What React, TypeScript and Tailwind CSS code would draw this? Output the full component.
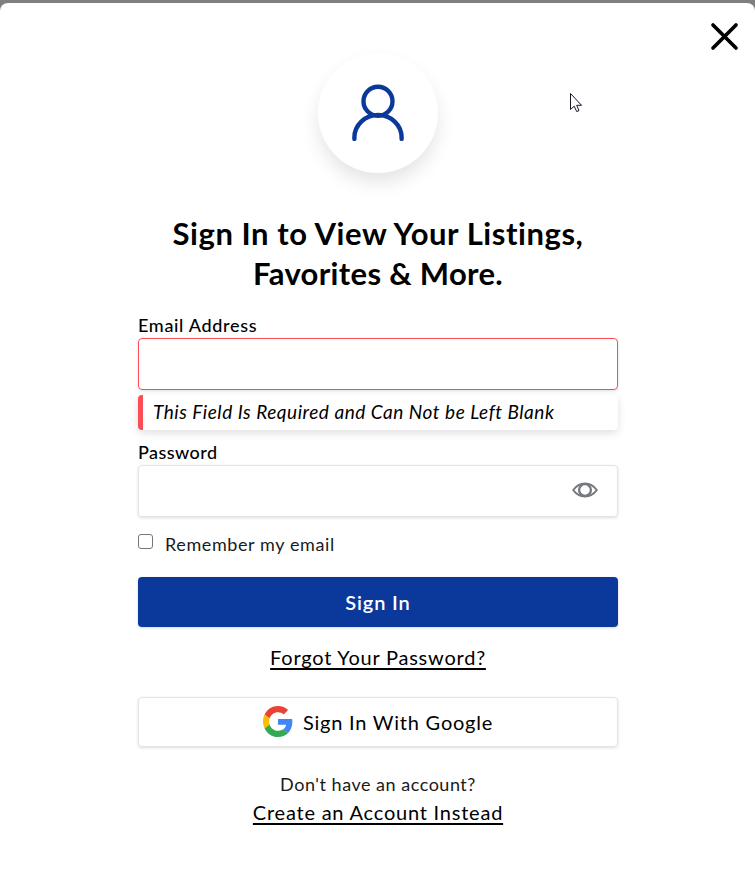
function UserIcon() {
  return (
    <svg width="56" height="60" viewBox="0 0 56 60" fill="none" stroke="#0a389b" strokeWidth="4.400" strokeLinecap="round">
      <circle cx="28" cy="18.300" r="14.500" />
      <path d="M4.400 55.900V54.500A23.600 22.500 0 0 1 51.600 54.500V55.900" />
    </svg>
  );
}

function GoogleLogo() {
  return (
    <svg width="30" height="31" viewBox="0 0 48 48" preserveAspectRatio="none">
      <path fill="#EA4335" d="M24 9.500c3.540 0 6.710 1.220 9.210 3.600l6.850-6.850C35.900 2.380 30.470 0 24 0 14.620 0 6.510 5.380 2.560 13.220l7.980 6.190C12.430 13.720 17.740 9.500 24 9.500z" />
      <path fill="#4285F4" d="M46.980 24.550c0-1.570-.15-3.090-.38-4.550H24v9.020h12.940c-.58 2.960-2.260 5.480-4.780 7.180l7.730 6c4.510-4.180 7.090-10.360 7.090-17.650z" />
      <path fill="#FBBC05" d="M10.530 28.590c-.48-1.450-.76-2.990-.76-4.590s.27-3.140.76-4.590l-7.980-6.190C.92 16.460 0 20.120 0 24s.92 7.540 2.560 10.780l7.970-6.190z" />
      <path fill="#34A853" d="M24 48c6.480 0 11.930-2.130 15.890-5.810l-7.730-6c-2.150 1.450-4.920 2.300-8.160 2.300-6.260 0-11.570-4.220-13.470-9.910l-7.980 6.190C6.510 42.620 14.620 48 24 48z" />
    </svg>
  );
}

export default function App() {
  return (
    <div className="h-[874px] w-[755px] overflow-hidden bg-[#7f7f7f] pt-[3px] font-['Lato',sans-serif] text-black">
      <div className="relative flex h-[871px] flex-col items-center rounded-t-[8px] bg-white">
        <button aria-label="Close" className="absolute top-[19px] right-[16px]">
          <svg width="29" height="29" viewBox="0 0 29 29" stroke="#000" strokeWidth="3.700" strokeLinecap="round">
            <path d="M3 3L26 26M26 3L3 26" />
          </svg>
        </button>
        <svg className="absolute top-[89px] left-[569px]" width="14" height="22" viewBox="0 0 14 22" fill="#fff" stroke="#15152a" strokeWidth="1">
          <path d="M1.500 1.500V17.500L5.200 14.200L7.700 19.600L10 18.600L7.700 13.300H12.500Z" />
        </svg>

        <div className="mt-[50px] ml-px flex size-[120px] shrink-0 items-center justify-center rounded-full bg-white shadow-[0_10px_20px_-2px_rgba(0,0,0,0.12)]">
          <UserIcon />
        </div>

        <h1 className="mt-[40px] ml-px text-center text-[31px] leading-[40px] font-bold whitespace-nowrap">
          <span className="block tracking-[0.560px]">Sign In to View Your Listings,</span>
          <span className="block tracking-[0.320px]">Favorites &amp; More.</span>
        </h1>

        <form className="ml-px flex w-[480px] flex-col">
          <label className="mt-[20px] h-[25px] text-[18px] leading-[25px] font-medium"><span className="tracking-[0.680px]">Email Address</span></label>
          <div className="h-[52px] rounded-[4px] border border-[#fa4d56] shadow-[0_1px_3px_rgba(0,0,0,0.12)]" />
          <div className="mt-[5px] flex h-[35px] items-center rounded-[4px] border-l-[5px] border-[#fa4d56] pl-[10px] text-[19px] italic shadow-[0_3px_8px_rgba(0,0,0,0.13)]">
            <span className="tracking-[0.530px]">This Field Is Required and Can Not be Left Blank</span>
          </div>
          <label className="mt-[10px] h-[25px] text-[18px] leading-[25px] font-medium"><span className="tracking-[0.450px]">Password</span></label>
          <div className="flex h-[52px] items-center justify-end rounded-[4px] border border-[#e4e4e4] pr-[19px] shadow-[0_1px_3px_rgba(0,0,0,0.14)]">
            <svg width="26" height="16" viewBox="0 0 26 16" fill="none" stroke="#747980" strokeWidth="2" className="-mt-[2px]">
              <path d="M1.200 8C7.500-.7 18.500-.7 24.800 8C18.500 16.700 7.500 16.700 1.200 8Z" strokeLinejoin="round" />
              <circle cx="13" cy="8" r="5.900" strokeWidth="2.300" />
            </svg>
          </div>
          <label className="mt-[14px] flex h-[26px] text-[18px] leading-[26px] text-[#1a1a1a]">
            <span className="mt-[3px] mr-[12px] size-[15px] rounded-[3px] border border-[#767676]" />
            <span className="tracking-[0.600px]">Remember my email</span>
          </label>
          <button type="button" className="mt-[20px] h-[50px] rounded-[4px] bg-[#0a389b] text-[20px] font-semibold text-white shadow-[0_1px_3px_rgba(0,0,0,0.16)]">
            <span className="tracking-[0.850px]">Sign In</span>
          </button>
          <a className="mt-[16px] h-[28px] self-center text-[20px] leading-[28px] underline decoration-2 underline-offset-[3px] [text-decoration-skip-ink:none]"><span className="tracking-[0.780px]">Forgot Your Password?</span></a>
          <button type="button" className="mt-[26px] flex h-[50px] items-center justify-center gap-[10px] rounded-[4px] border border-[#e4e4e4] text-[20px] shadow-[0_1px_3px_rgba(0,0,0,0.14)]">
            <span className="-mt-[2px]"><GoogleLogo /></span>
            <span className="tracking-[0.780px]">Sign In With Google</span>
          </button>
          <p className="mt-[24px] self-center text-[18px] leading-[26px] text-[#1a1a1a]"><span className="tracking-[0.520px]">Don't have an account?</span></p>
          <a className="h-[30px] self-center text-[20px] leading-[30px] underline decoration-2 underline-offset-[3px]"><span className="tracking-[0.780px]">Create an Account Instead</span></a>
        </form>
      </div>
    </div>
  );
}
